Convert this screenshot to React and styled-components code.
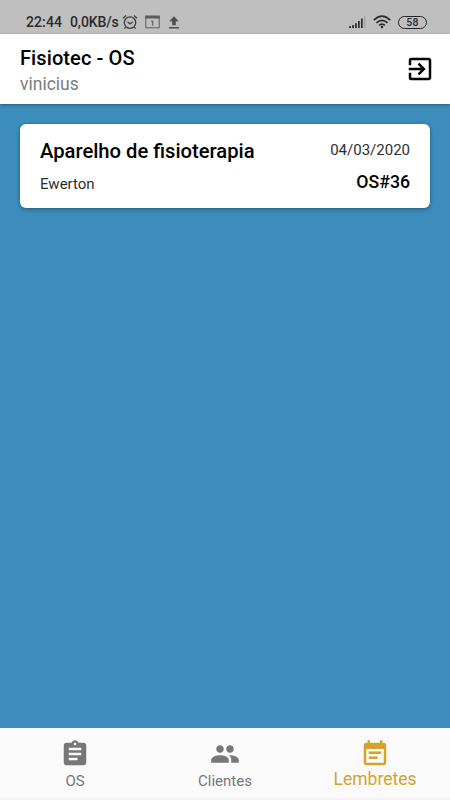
import React from "react";
import styled, { createGlobalStyle } from "styled-components";
import {
  MdAssignment,
  MdEventNote,
  MdExitToApp,
  MdPeople,
} from "react-icons/md";

const orders = [
  {
    id: 36,
    title: "Aparelho de fisioterapia",
    client: "Ewerton",
    date: "04/03/2020",
  },
];

const tabs = [
  { label: "OS", Icon: MdAssignment },
  { label: "Clientes", Icon: MdPeople },
  { label: "Lembretes", Icon: MdEventNote, active: true },
];

function AlarmIcon() {
  return (
    <svg width="16" height="16" viewBox="0 0 16 16" fill="none" stroke="#3c3c3c">
      <circle cx="8" cy="8.6" r="5.7" strokeWidth="1.3" />
      <path d="M1 4.2 4 1.5M15 4.2l-3-2.7M3.6 13.2l-1.2 1.5M12.4 13.2l1.2 1.5" strokeWidth="1.2" />
      <path d="M5.5 7.8 8 9.9l2.7-2.1" strokeWidth="1.2" />
    </svg>
  );
}

function CalendarIcon() {
  return (
    <svg width="15" height="14" viewBox="0 0 15 14" fill="none" stroke="#5a5a5a">
      <path d="M.8 1.5h13.4v11.3H.8z" strokeWidth="1" />
      <path d="M.3 2h14.4" strokeWidth="3" />
      <path d="M6 6.2h1.7v4.6" strokeWidth="1.1" />
    </svg>
  );
}

function UploadIcon() {
  return (
    <svg width="10" height="13" viewBox="0 0 10 13" fill="#4f4f4f">
      <path d="M5 .3.3 5.3h2.9v4h3.6v-4h2.9zM0 11h10v1.4H0z" />
    </svg>
  );
}

function SignalIcon() {
  return (
    <svg width="17" height="13" viewBox="0 0 17 13" fill="#2b2b2b">
      <path d="M0 10.2h2V12H0zM3.2 9H5v3H3.2zM6.1 7.2h1.7V12H6.1zM9 5h1.7v7H9zM12 2.5h1.7V12H12z" />
      <path d="M15 .3h1.5V12H15z" fill="#a5a5a5" />
    </svg>
  );
}

function WifiIcon() {
  return (
    <svg width="18" height="14" viewBox="0 0 18 14" fill="none" stroke="#2b2b2b" strokeWidth="1.7">
      <path d="M.8 5.2Q9-2.8 17.2 5.2M3.5 7.9q5.5-5.2 11 0M6.1 10.4q2.9-2.6 5.8 0" />
      <circle cx="9" cy="12" r="1.3" fill="#2b2b2b" stroke="none" />
    </svg>
  );
}

export default function App() {
  return (
    <>
      <GlobalStyle />
      <Screen>
        <StatusBar>
          <Clock>22:44</Clock>
          <Speed>0,0KB/s</Speed>
          <Notifications>
            <AlarmIcon />
            <CalendarIcon />
            <UploadIcon />
          </Notifications>
          <System>
            <SignalIcon />
            <WifiIcon />
            <Battery>58</Battery>
          </System>
        </StatusBar>
        <Header>
          <Heading>
            <AppName>Fisiotec - OS</AppName>
            <User>vinicius</User>
          </Heading>
          <Logout aria-label="Sair">
            <MdExitToApp />
          </Logout>
        </Header>
        <Content>
          {orders.map((order) => (
            <Card key={order.id}>
              <Row>
                <Title>{order.title}</Title>
                <Date>{order.date}</Date>
              </Row>
              <Row>
                <Client>{order.client}</Client>
                <Number>OS#{order.id}</Number>
              </Row>
            </Card>
          ))}
        </Content>
        <TabBar>
          {tabs.map(({ label, Icon, active }) => (
            <Tab key={label} $active={active}>
              <Icon />
              <span>{label}</span>
            </Tab>
          ))}
        </TabBar>
      </Screen>
    </>
  );
}

const GlobalStyle = createGlobalStyle`
  * {
    box-sizing: border-box;
  }
  body {
    margin: 0;
    font-family: Roboto, "Liberation Sans", sans-serif;
  }
`;

const Screen = styled.div`
  display: flex;
  flex-direction: column;
  height: 100vh;
  overflow: hidden;
  background: #3c8dbc;
`;

const StatusBar = styled.div`
  display: flex;
  align-items: center;
  flex: none;
  height: 34px;
  padding: 10px 23px 0 26px;
  background: #bfbfbf;
  color: #2b2b2b;
  font-size: 14px;
  font-weight: 500;
  line-height: 24px;
`;

const Clock = styled.span`
  width: 44px;
  letter-spacing: 0.1px;
`;

const Speed = styled.span`
  width: 52px;
  letter-spacing: -0.1px;
  white-space: nowrap;
`;

const Notifications = styled.div`
  display: flex;
  align-items: center;
  gap: 6.5px;
  svg:last-child {
    margin-left: 3px;
  }
`;

const System = styled.div`
  display: flex;
  align-items: center;
  margin-left: auto;
  svg {
    margin-right: 7px;
  }
`;

const Battery = styled.div`
  width: 29px;
  height: 13px;
  border: 1px solid #222;
  border-radius: 7px;
  font-size: 10.5px;
  font-weight: 500;
  line-height: 11px;
  letter-spacing: 0.4px;
  text-align: center;
`;

const Header = styled.header`
  display: flex;
  align-items: center;
  justify-content: space-between;
  flex: none;
  height: 70px;
  padding: 0 15px 0 20px;
  background: #fff;
  box-shadow: 0 1px 3px rgba(0, 0, 0, 0.35);
`;

const Heading = styled.div`
  padding-top: 3px;
`;

const AppName = styled.h1`
  margin: 0;
  color: #000;
  font-size: 20px;
  font-weight: 500;
  line-height: 26px;
  letter-spacing: 0.1px;
`;

const User = styled.div`
  color: #7c7c7c;
  font-size: 17.5px;
  line-height: 26px;
`;

const Logout = styled.button`
  display: flex;
  padding: 0;
  border: 0;
  background: none;
  color: #000;
  font-size: 30px;
`;

const Content = styled.main`
  flex: 1;
  padding: 20px;
`;

const Card = styled.article`
  display: flex;
  flex-direction: column;
  height: 84px;
  padding: 12px 20px;
  border-radius: 6px;
  background: #fff;
  color: #000;
  box-shadow: 0 1px 4px rgba(0, 0, 0, 0.4);
`;

const Row = styled.div`
  display: flex;
  align-items: center;
  justify-content: space-between;
  height: 30px;
`;

const Title = styled.h2`
  margin: 0;
  font-size: 20.2px;
  font-weight: 500;
`;

const Date = styled.span`
  padding-bottom: 2px;
  color: #2e2e2e;
  font-size: 15px;
`;

const Client = styled.span`
  padding-top: 6px;
  color: #2e2e2e;
  font-size: 15px;
`;

const Number = styled.span`
  padding-top: 1px;
  font-size: 17.7px;
  font-weight: 500;
`;

const TabBar = styled.nav`
  display: flex;
  flex: none;
  height: 72px;
  border-bottom: 2px solid #f3f3f3;
  background: #fafafa;
`;

const Tab = styled.div`
  display: flex;
  flex: 1;
  flex-direction: column;
  align-items: center;
  padding-top: 10.5px;
  color: ${({ $active }) => ($active ? "#d4a32c" : "#777")};
  font-size: ${({ $active }) => ($active ? "17.5px" : "15px")};
  line-height: ${({ $active }) => ($active ? "21px" : "25px")};
  svg {
    flex: none;
    font-size: 30px;
  }
`;
